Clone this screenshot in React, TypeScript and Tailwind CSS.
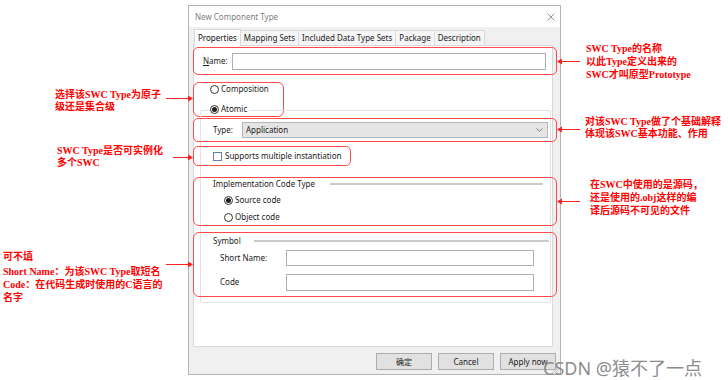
import React from 'react';

const uiFont = { fontFamily: '"Noto Sans", "Noto Sans CJK SC", sans-serif' };
const noteFont = { fontFamily: '"Liberation Serif", "Noto Sans CJK SC", serif' };

// red arrow, head on the right or left end
const Arrow = ({ width, dir }: { width: number; dir: 'left' | 'right' }) => (
    <svg width={width} height={7} viewBox={`0 0 ${width} 7`} className="block">
        {dir === 'right' ? (
            <>
                <line x1={0} y1={3.5} x2={width - 4} y2={3.5} stroke="#ff2020" strokeWidth={1} />
                <polygon points={`${width - 5},0.5 ${width},3.5 ${width - 5},6.5`} fill="#ff2020" />
            </>
        ) : (
            <>
                <line x1={4} y1={3.5} x2={width} y2={3.5} stroke="#ff2020" strokeWidth={1} />
                <polygon points={`5,0.5 0,3.5 5,6.5`} fill="#ff2020" />
            </>
        )}
    </svg>
);

const Radio = ({ checked }: { checked?: boolean }) => (
    <span className="flex h-[9px] w-[9px] shrink-0 items-center justify-center rounded-full border border-[#333333] bg-white">
        {checked && <span className="h-[5px] w-[5px] rounded-full bg-[#1e1e1e]" />}
    </span>
);

const Tab = ({ label, active }: { label: string; active?: boolean }) => (
    <div
        className={
            active
                ? 'relative z-10 -mb-px flex h-[17px] items-center border border-b-0 border-[#d9d9d9] bg-white px-[3px] text-[#111111]'
                : '-ml-px flex h-[15px] items-center border border-b-0 border-[#dadada] bg-[#f6f6f6] px-[3px] text-[#1a1a1a]'
        }
    >
        {label}
    </div>
);

const Dialog = () => (
    <div className="relative mt-[5px] flex h-[370px] w-[373px] shrink-0 flex-col border border-[#b4b4b4] bg-[#f0f0f0] text-[8px] leading-[12px] text-[#1a1a1a]" style={uiFont}>
        {/* title bar */}
        <div className="flex h-[21px] items-center justify-between bg-white pl-[6px] pr-[5px] text-[#808080]">
            <span>New Component Type</span>
            <svg width="8" height="8" viewBox="0 0 8 8">
                <path d="M0.5 0.5L7.5 7.5M7.5 0.5L0.5 7.5" stroke="#8a8a8a" strokeWidth="0.9" />
            </svg>
        </div>

        <div className="flex flex-1 flex-col pl-[4px] pr-[7px] pt-[1px]">
            {/* tabs */}
            <div className="flex h-[17px] items-end pl-px">
                <Tab label="Properties" active />
                <Tab label="Mapping Sets" />
                <Tab label="Included Data Type Sets" />
                <Tab label="Package" />
                <Tab label="Description" />
            </div>

            {/* tab panel */}
            <div className="flex h-[302px] w-[360px] flex-col border border-[#d9d9d9] bg-white">
                {/* Name */}
                <div className="mt-px -ml-px flex h-[28px] w-[364px] items-center rounded-[5px] border border-[#ff4b4b] pl-[9px] pr-[10px]">
                    <span className="w-[29px]"><span className="underline">N</span>ame:</span>
                    <div className="h-[17px] flex-1 border border-[#b0b0b0] bg-white" />
                </div>

                {/* Composition / Atomic */}
                <div className="mt-[7px] -ml-px flex h-[35px] w-[91px] flex-col gap-[8px] rounded-[6px] border border-[#ff4b4b] pl-[16px]">
                    <div className="flex h-[12px] items-center gap-[2px]">
                        <Radio />
                        <span>Composition</span>
                    </div>
                    <div className="relative z-10 flex h-[12px] w-fit items-center gap-[2px] bg-white pr-[3px]">
                        <Radio checked />
                        <span>Atomic</span>
                    </div>
                </div>

                {/* Atomic group box */}
                <div className="-mt-[7px] ml-[6px] flex h-[193px] w-[351px] flex-col rounded-[2px] border border-[#e2e2e2]">
                    <div className="mt-[7px] -ml-[8px] flex h-[24px] w-[364px] items-center rounded-[5px] border border-[#ff4b4b] pl-[19px] pr-[8px]">
                        <span className="w-[29px]">Type:</span>
                        <div className="flex h-[16px] flex-1 items-center justify-between border border-[#b8b8b8] bg-[#e5e5e5] pl-[3px] pr-[4px]">
                            <span>Application</span>
                            <svg width="7" height="4" viewBox="0 0 7 4">
                                <path d="M0.5 0.5L3.5 3.3L6.5 0.5" fill="none" stroke="#7a7a7a" strokeWidth="0.9" />
                            </svg>
                        </div>
                    </div>

                    <div className="mt-[4px] -ml-[8px] flex h-[20px] w-[158px] items-center gap-[3px] rounded-[5px] border border-[#ff4b4b] pl-[19px]">
                        <span className="h-[9px] w-[9px] border border-[#5d82ad] bg-white" />
                        <span>Supports multiple instantiation</span>
                    </div>

                    <div className="mt-[11px] -ml-[8px] flex h-[49px] w-[364px] flex-col rounded-[6px] border border-[#ff4b4b] pl-[19px] pr-[13px]">
                        <div className="flex h-[12px] items-center gap-[15px]">
                            <span>Implementation Code Type</span>
                            <span className="h-[2px] flex-1 bg-[#cbcbcb]" />
                        </div>
                        <div className="mt-[4px] ml-[11px] flex h-[12px] items-center gap-[2px]">
                            <Radio checked />
                            <span>Source code</span>
                        </div>
                        <div className="mt-[5px] ml-[11px] flex h-[12px] items-center gap-[2px]">
                            <Radio />
                            <span>Object code</span>
                        </div>
                    </div>

                    <div className="mt-[6px] -ml-[8px] flex h-[65px] w-[364px] flex-col rounded-[6px] border border-[#ff4b4b] pl-[19px] pr-[7px] pt-[2px]">
                        <div className="flex h-[12px] items-center gap-[13px]">
                            <span>Symbol</span>
                            <span className="h-[2px] flex-1 bg-[#cbcbcb]" />
                        </div>
                        <div className="mt-[3px] ml-[7px] flex h-[16px] items-center">
                            <span className="w-[66px]">Short Name:</span>
                            <div className="h-[16px] w-[248px] border border-[#b0b0b0] bg-white" />
                        </div>
                        <div className="mt-[8px] ml-[7px] flex h-[16px] items-center">
                            <span className="w-[66px]">Code</span>
                            <div className="h-[17px] w-[248px] border border-[#b0b0b0] bg-white" />
                        </div>
                    </div>
                </div>
            </div>

            {/* buttons */}
            <div className="mt-[6px] -mr-[3px] flex justify-end gap-[6px]">
                {['确定', 'Cancel', 'Apply now'].map(b => (
                    <button key={b} className="flex h-[17px] w-[56px] items-center justify-center border border-[#adadad] bg-[#e1e1e1] text-[#1a1a1a]">
                        {b}
                    </button>
                ))}
            </div>
        </div>

        {/* resize grip */}
        <svg width="7" height="7" viewBox="0 0 7 7" className="absolute bottom-px right-px">
            <path d="M6.5 1L1 6.5M6.5 3.5L3.5 6.5M6.5 5.5L5.5 6.5" stroke="#b0b0b0" strokeWidth="0.8" />
        </svg>
    </div>
);

export default function App() {
    return (
        <div className="relative flex h-[380px] w-[728px] overflow-hidden bg-white">
            {/* left notes */}
            <aside className="flex w-[188px] shrink-0 flex-col text-[10px] font-bold text-[#ff0000]" style={noteFont}>
                <div className="relative mt-[89px] whitespace-nowrap pl-[55px] leading-[12px]">
                    <p>选择该SWC Type为原子</p>
                    <p>级还是集合级</p>
                    <div className="absolute left-[166px] top-[6px] z-20"><Arrow width={27} dir="right" /></div>
                </div>
                <div className="relative mt-[32px] whitespace-nowrap pl-[57px] leading-[12px]">
                    <p>SWC Type是否可实例化</p>
                    <p>多个SWC</p>
                    <div className="absolute left-[173px] top-[9px] z-20"><Arrow width={20} dir="right" /></div>
                </div>
                <div className="relative mt-[81px] whitespace-nowrap pl-[3px] leading-[13px]">
                    <p className="mb-[2px]">可不填</p>
                    <p>Short Name：为该SWC Type取短名</p>
                    <p>Code：在代码生成时使用的C语言的</p>
                    <p>名字</p>
                    <div className="absolute left-[166px] top-[11px] z-20"><Arrow width={27} dir="right" /></div>
                </div>
            </aside>

            <Dialog />

            {/* right notes */}
            <aside className="flex flex-1 flex-col text-[10px] font-bold text-[#ff0000]" style={noteFont}>
                <div className="relative mt-[42px] whitespace-nowrap pl-[25px] leading-[13px]">
                    <p>SWC Type的名称</p>
                    <p>以此Type定义出来的</p>
                    <p>SWC才叫原型Prototype</p>
                    <div className="absolute -left-[4px] top-[16px] z-20"><Arrow width={23} dir="left" /></div>
                </div>
                <div className="relative mt-[35px] whitespace-nowrap pl-[24px] leading-[12px]">
                    <p>对该SWC Type做了个基础解释</p>
                    <p>体现该SWC基本功能、作用</p>
                    <div className="absolute -left-[4px] top-[10px] z-20"><Arrow width={23} dir="left" /></div>
                </div>
                <div className="relative mt-[38px] whitespace-nowrap pl-[29px] leading-[13px]">
                    <p>在SWC中使用的是源码，</p>
                    <p>还是使用的.obj这样的编</p>
                    <p>译后源码不可见的文件</p>
                    <div className="absolute -left-[4px] top-[20px] z-20"><Arrow width={23} dir="left" /></div>
                </div>
            </aside>

            {/* site watermark */}
            <span className="pointer-events-none absolute left-[543px] top-[357px] z-30 whitespace-nowrap text-[18px] leading-[22px] text-[#8c8c8c]" style={uiFont}>
                CSDN @猿不了一点
            </span>
        </div>
    );
}
